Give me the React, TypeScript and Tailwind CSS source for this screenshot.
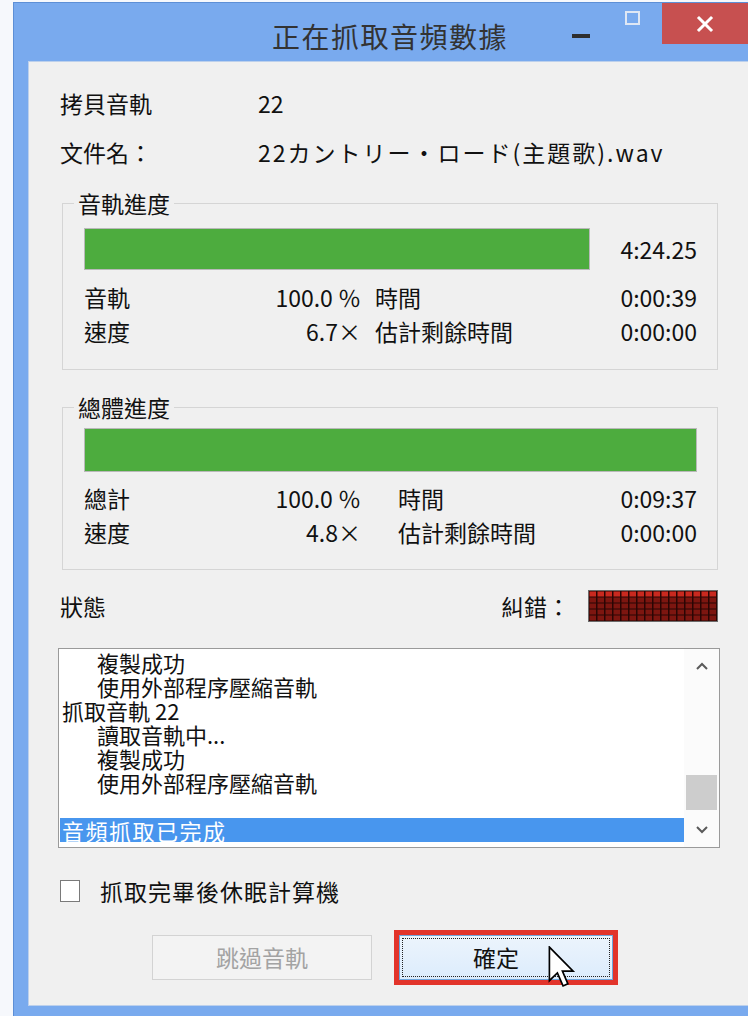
import React from "react";

function Led() {
  const cells: React.ReactElement[] = [];
  for (let r = 0; r < 5; r++) {
    for (let c = 0; c < 16; c++) {
      cells.push(
        <rect
          key={`${r}-${c}`}
          x={1.5 + c * 8}
          y={1.5 + r * 6}
          width={6.5}
          height={5}
          fill={r === 0 ? "#c9291f" : "#7d1610"}
        />
      );
    }
  }
  return (
    <svg width="130" height="32" viewBox="0 0 130 32" className="block">
      <rect x="0.5" y="0.5" width="129" height="31" fill="#2a0604" stroke="#6b6b6b" />
      {cells}
    </svg>
  );
}

function StatRow({
  label,
  num,
  name,
  val,
  gapClass,
}: {
  label: string;
  num: string;
  name: string;
  val: string;
  gapClass: string;
}) {
  return (
    <div className="flex items-center h-[34px] leading-[34px]">
      <div className="w-[277px] flex justify-between">
        <span>{label}</span>
        <span>{num}</span>
      </div>
      <span className={gapClass}>{name}</span>
      <span className="ml-auto">{val}</span>
    </div>
  );
}

function Chevron({ up }: { up?: boolean }) {
  return (
    <svg width="12" height="8" viewBox="0 0 12 8">
      <path
        d={up ? "M1 7 L6 2 L11 7" : "M1 1 L6 6 L11 1"}
        fill="none"
        stroke="#5a5a5a"
        strokeWidth="2"
      />
    </svg>
  );
}

export default function App() {
  const listLines: { t: string; indent: boolean }[] = [
    { t: "複製成功", indent: true },
    { t: "使用外部程序壓縮音軌", indent: true },
    { t: "抓取音軌 22", indent: false },
    { t: "讀取音軌中...", indent: true },
    { t: "複製成功", indent: true },
    { t: "使用外部程序壓縮音軌", indent: true },
    { t: "\u00a0", indent: false },
  ];

  return (
    <div className="w-[748px] h-[1016px] overflow-hidden bg-[#f6f8fc] flex font-['Noto_Sans_CJK_TC',sans-serif] text-[#111]">
      <div className="ml-[13px] mt-[2px] flex-1 min-w-0 flex flex-col bg-[#79aaee] border-l border-t border-[#5d8fd6]">
        {/* Title bar */}
        <div className="h-[58px] flex items-start shrink-0">
          <span className="ml-[258px] mt-[13px] text-[28px] leading-[40px] tracking-[1.5px] text-[#333] whitespace-nowrap">
            正在抓取音頻數據
          </span>
          <div className="flex-1" />
          <div className="mt-[31px] w-[18px] h-[4px] bg-[#2e2e2e]" />
          <div className="ml-[35px] mt-[8px] w-[15px] h-[14px] border-[2px] border-[#dfe7f4]" />
          <div className="ml-[22px] w-[86px] h-[41px] bg-[#c75050] flex items-center justify-center">
            <svg width="18" height="18" viewBox="0 0 18 18">
              <path d="M3 3 L15 15 M15 3 L3 15" stroke="white" strokeWidth="3" strokeLinecap="square" />
            </svg>
          </div>
        </div>

        {/* Content */}
        <div className="ml-[14px] mb-[10px] flex-1 bg-[#f0f0f0] border-l border-t border-b border-[#bcd0ec] flex flex-col pl-[31px] pt-[28px] text-[23px]">
          <div className="flex leading-[26px] h-[26px]">
            <span className="w-[198px]">拷貝音軌</span>
            <span>22</span>
          </div>
          <div className="flex leading-[26px] h-[26px] mt-[23px]">
            <span className="w-[198px]">文件名：</span>
            <span className="whitespace-nowrap tracking-[2px]">22カントリー・ロード(主題歌).wav</span>
          </div>

          {/* Group 1 */}
          <fieldset className="mt-[25px] ml-[2px] w-[656px] border border-[#d5d5d5] pl-[21px] pr-[20px] pb-[21px]">
            <legend className="-ml-[10px] px-[4px] leading-[26px]">音軌進度</legend>
            <div className="mt-[12px] flex items-center h-[42px]">
              <div className="w-[506px] h-[42px] bg-[#4dac3e] border border-[#b9b9b9]" />
              <span className="ml-auto">4:24.25</span>
            </div>
            <div className="mt-[10px]">
              <StatRow label="音軌" num="100.0 ％" name="時間" val="0:00:39" gapClass="ml-[14px]" />
              <StatRow label="速度" num="6.7×" name="估計剩餘時間" val="0:00:00" gapClass="ml-[14px]" />
            </div>
          </fieldset>

          {/* Group 2 */}
          <fieldset className="mt-[24px] ml-[2px] w-[656px] border border-[#d5d5d5] pl-[21px] pr-[20px] pb-[20px]">
            <legend className="-ml-[10px] px-[4px] leading-[26px]">總體進度</legend>
            <div className="mt-[8px] h-[44px] bg-[#4dac3e] border border-[#b9b9b9]" />
            <div className="mt-[9px]">
              <StatRow label="總計" num="100.0 ％" name="時間" val="0:09:37" gapClass="ml-[37px]" />
              <StatRow label="速度" num="4.8×" name="估計剩餘時間" val="0:00:00" gapClass="ml-[37px]" />
            </div>
          </fieldset>

          {/* Status row */}
          <div className="mt-[20px] w-[658px] h-[32px] flex items-center">
            <span className="leading-[32px]">狀態</span>
            <span className="ml-auto leading-[32px]">糾錯：</span>
            <div className="ml-[18px]">
              <Led />
            </div>
          </div>

          {/* List box */}
          <div className="mt-[26px] -ml-[2px] w-[662px] h-[200px] bg-white border border-[#9a9a9a] flex text-[22px]">
            <div className="flex-1 min-w-0 pt-[1px] overflow-hidden">
              {listLines.map((l, i) => (
                <div
                  key={i}
                  className={`h-[24px] leading-[24px] whitespace-nowrap ${l.indent ? "pl-[38px]" : "pl-[3px]"}`}
                >
                  {l.t}
                </div>
              ))}
              <div className="ml-[1px] h-[24px] leading-[24px] pl-[2px] bg-[#4896ee] text-white whitespace-nowrap tracking-[1.5px]">
                音頻抓取已完成
              </div>
            </div>
            <div className="w-[35px] flex flex-col bg-[#fbfbfb]">
              <div className="h-[34px] flex items-center justify-center">
                <Chevron up />
              </div>
              <div className="flex-1">
                <div className="mt-[92px] mx-[2px] h-[35px] bg-[#cdcdcd]" />
              </div>
              <div className="h-[34px] flex items-center justify-center">
                <Chevron />
              </div>
            </div>
          </div>

          {/* Checkbox */}
          <div className="mt-[32px] flex items-center h-[22px]">
            <div className="w-[20px] h-[22px] bg-white border border-[#7a7a7a]" />
            <span className="ml-[20px] leading-[26px] whitespace-nowrap tracking-[1px]">抓取完畢後休眠計算機</span>
          </div>

          {/* Buttons */}
          <div className="mt-[28px] flex items-center">
            <div className="ml-[92px] w-[220px] h-[45px] border border-[#d3d3d3] bg-[#f3f3f3] flex items-center justify-center text-[#a3a3a3]">
              跳過音軌
            </div>
            <div className="ml-[22px] relative w-[224px] h-[55px] border-[5px] border-[#e2342b]">
              <div className="w-full h-full border border-[#6fa6dc] bg-gradient-to-b from-[#ecf4fc] to-[#dcecfc] p-[2px]">
                <div className="w-full h-full border border-dotted border-[#222] flex items-center justify-center pr-[20px]">
                  確定
                </div>
              </div>
              <svg
                className="absolute left-[149px] top-[11px]"
                width="28"
                height="42"
                viewBox="0 0 13 20"
              >
                <path
                  d="M0.5 0.5 V16.5 L4.3 12.8 L7 19 L9.3 18 L6.7 12 H11.8 Z"
                  fill="white"
                  stroke="black"
                  strokeWidth="0.8"
                />
              </svg>
            </div>
          </div>
        </div>
      </div>
    </div>
  );
}
